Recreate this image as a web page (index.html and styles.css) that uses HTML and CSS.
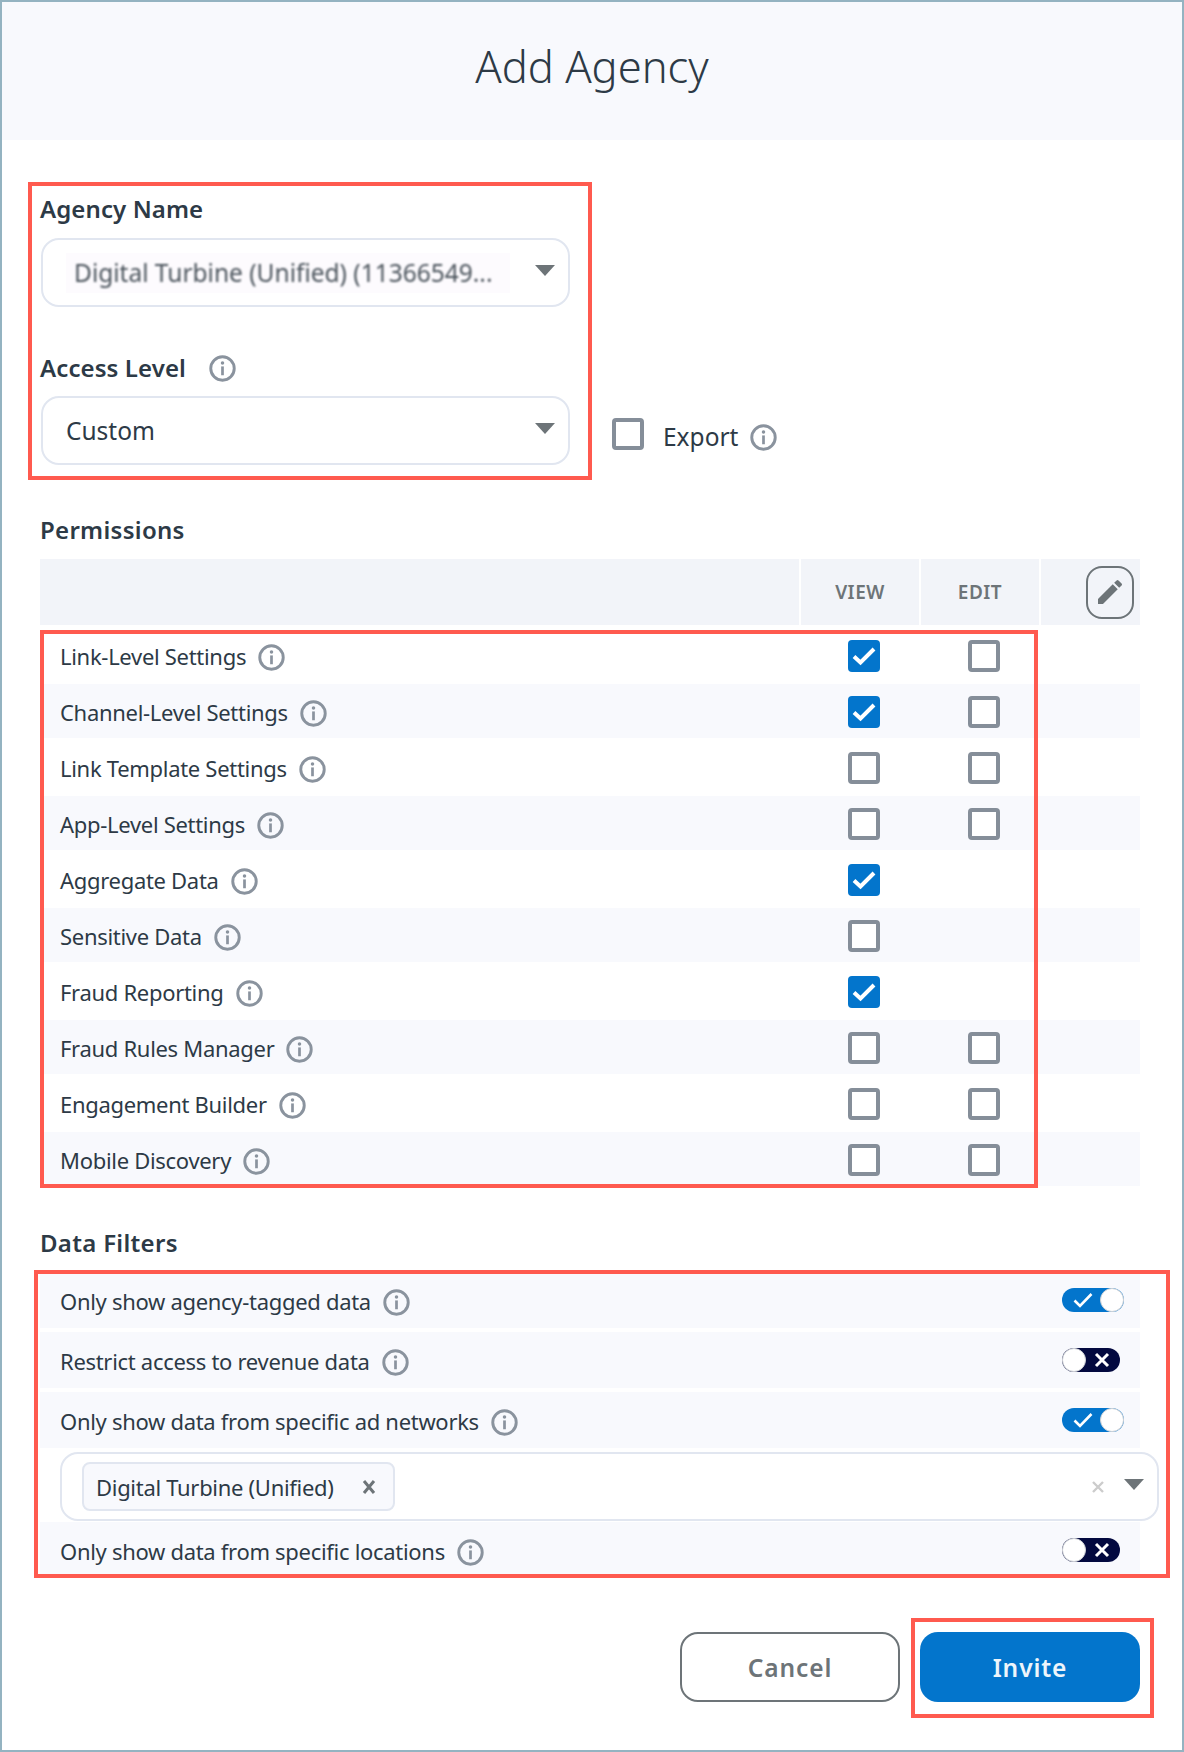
FILE: index.html
```html
<!DOCTYPE html>
<html>
<head>
<meta charset="utf-8">
<title>Add Agency</title>
<link rel="stylesheet" href="styles.css">
</head>
<body>
<svg class="defs" width="0" height="0">
    <symbol id="info" viewBox="0 0 26 26">
        <circle cx="13" cy="13" r="11.3" fill="none" stroke="#8a939e" stroke-width="2.8"/>
        <circle cx="13" cy="7.8" r="1.7" fill="#8a939e"/>
        <rect x="11.7" y="11" width="2.6" height="8.5" fill="#8a939e"/>
    </symbol>
    <symbol id="tick" viewBox="0 0 32 32">
        <polyline points="6,16.5 12.5,22.5 26,9" fill="none" stroke="#fff" stroke-width="4"/>
    </symbol>
</svg>

<div class="dialog">
    <div class="dialog-header">Add Agency</div>

    <div class="dialog-body">
        <div class="access-row">
            <div class="access-fields">
                <div class="field-label">Agency Name</div>
                <div class="select select-first">
                    <span class="blurred-value"><span>Digital Turbine (Unified) (11366549...</span></span>
                    <span class="arrow"></span>
                </div>
                <div class="field-label field-label-second">Access Level <svg class="info info-wide"><use href="#info"/></svg></div>
                <div class="select select-second">
                    <span class="select-value">Custom</span>
                    <span class="arrow"></span>
                </div>
                <div class="annotation annotation-access"></div>
            </div>
            <div class="export">
                <span class="check"></span>
                <span class="export-text">Export</span>
                <svg class="info"><use href="#info"/></svg>
            </div>
        </div>

        <div class="section-title section-permissions">Permissions</div>
        <div class="perm-head">
            <div class="head-cell"></div>
            <div class="head-cell">VIEW</div>
            <div class="head-cell">EDIT</div>
            <div class="head-cell head-edit">
                <button class="pencil-btn">
                    <svg width="32" height="32" viewBox="0 0 24 24"><path fill="#6d7478" d="M3 17.25V21h3.75L17.81 9.94l-3.75-3.75L3 17.25zM20.71 7.04a1 1 0 0 0 0-1.41l-2.34-2.34a1 1 0 0 0-1.41 0l-1.83 1.83 3.75 3.75 1.83-1.83z"/></svg>
                </button>
            </div>
        </div>

        <div class="perm-rows">
            <div class="perm-row">
                <div class="perm-name">Link-Level Settings <svg class="info"><use href="#info"/></svg></div>
                <div class="perm-cell"><span class="check checked"><svg><use href="#tick"/></svg></span></div>
                <div class="perm-cell"><span class="check"></span></div>
            </div>
            <div class="perm-row">
                <div class="perm-name">Channel-Level Settings <svg class="info"><use href="#info"/></svg></div>
                <div class="perm-cell"><span class="check checked"><svg><use href="#tick"/></svg></span></div>
                <div class="perm-cell"><span class="check"></span></div>
            </div>
            <div class="perm-row">
                <div class="perm-name">Link Template Settings <svg class="info"><use href="#info"/></svg></div>
                <div class="perm-cell"><span class="check"></span></div>
                <div class="perm-cell"><span class="check"></span></div>
            </div>
            <div class="perm-row">
                <div class="perm-name">App-Level Settings <svg class="info"><use href="#info"/></svg></div>
                <div class="perm-cell"><span class="check"></span></div>
                <div class="perm-cell"><span class="check"></span></div>
            </div>
            <div class="perm-row">
                <div class="perm-name">Aggregate Data <svg class="info"><use href="#info"/></svg></div>
                <div class="perm-cell"><span class="check checked"><svg><use href="#tick"/></svg></span></div>
                <div class="perm-cell"></div>
            </div>
            <div class="perm-row">
                <div class="perm-name">Sensitive Data <svg class="info"><use href="#info"/></svg></div>
                <div class="perm-cell"><span class="check"></span></div>
                <div class="perm-cell"></div>
            </div>
            <div class="perm-row">
                <div class="perm-name">Fraud Reporting <svg class="info"><use href="#info"/></svg></div>
                <div class="perm-cell"><span class="check checked"><svg><use href="#tick"/></svg></span></div>
                <div class="perm-cell"></div>
            </div>
            <div class="perm-row">
                <div class="perm-name">Fraud Rules Manager <svg class="info"><use href="#info"/></svg></div>
                <div class="perm-cell"><span class="check"></span></div>
                <div class="perm-cell"><span class="check"></span></div>
            </div>
            <div class="perm-row">
                <div class="perm-name">Engagement Builder <svg class="info"><use href="#info"/></svg></div>
                <div class="perm-cell"><span class="check"></span></div>
                <div class="perm-cell"><span class="check"></span></div>
            </div>
            <div class="perm-row">
                <div class="perm-name">Mobile Discovery <svg class="info"><use href="#info"/></svg></div>
                <div class="perm-cell"><span class="check"></span></div>
                <div class="perm-cell"><span class="check"></span></div>
            </div>
            <div class="annotation annotation-perms"></div>
        </div>

        <div class="section-title section-filters">Data Filters</div>
        <div class="filters">
            <div class="filter-row">
                <div class="perm-name">Only show agency-tagged data <svg class="info"><use href="#info"/></svg></div>
                <div class="toggle toggle-on">
                    <svg width="20" height="16" viewBox="0 0 20 16"><polyline points="1.5,8.5 7,14 18.5,2" fill="none" stroke="#fff" stroke-width="2.6"/></svg>
                    <span class="knob"></span>
                </div>
            </div>
            <div class="filter-row">
                <div class="perm-name">Restrict access to revenue data <svg class="info"><use href="#info"/></svg></div>
                <div class="toggle toggle-off">
                    <span class="knob"></span>
                    <svg width="16" height="16" viewBox="0 0 16 16"><path d="M2 2l12 12M14 2L2 14" stroke="#fff" stroke-width="3"/></svg>
                </div>
            </div>
            <div class="filter-row">
                <div class="perm-name">Only show data from specific ad networks <svg class="info"><use href="#info"/></svg></div>
                <div class="toggle toggle-on">
                    <svg width="20" height="16" viewBox="0 0 20 16"><polyline points="1.5,8.5 7,14 18.5,2" fill="none" stroke="#fff" stroke-width="2.6"/></svg>
                    <span class="knob"></span>
                </div>
            </div>
            <div class="select select-networks">
                <div class="chip">
                    <span>Digital Turbine (Unified)</span>
                    <svg width="14" height="16" viewBox="0 0 14 16"><path d="M2 2l10 12M12 2L2 14" stroke="#6d7478" stroke-width="3"/></svg>
                </div>
                <svg class="clear-x" width="12" height="12" viewBox="0 0 12 12"><path d="M1 1l10 10M11 1L1 11" stroke="#ccc" stroke-width="2.4"/></svg>
                <span class="arrow"></span>
            </div>
            <div class="filter-row">
                <div class="perm-name">Only show data from specific locations <svg class="info"><use href="#info"/></svg></div>
                <div class="toggle toggle-off">
                    <span class="knob"></span>
                    <svg width="16" height="16" viewBox="0 0 16 16"><path d="M2 2l12 12M14 2L2 14" stroke="#fff" stroke-width="3"/></svg>
                </div>
            </div>
            <div class="annotation annotation-filters"></div>
        </div>

        <div class="actions">
            <button class="btn btn-cancel">Cancel</button>
            <button class="btn btn-invite">Invite<span class="annotation annotation-invite"></span></button>
        </div>
    </div>
</div>
</body>
</html>
```

FILE: styles.css
```css
* {
    margin: 0;
    padding: 0;
    box-sizing: border-box;
}

body {
    background: white;
    font-family: "Noto Sans", "Open Sans", Arial, sans-serif;
    font-stretch: 87.5%;
    color: #2d3a46;
}

.defs {
    position: absolute;
}

.dialog {
    width: 1184px;
    height: 1752px;
    border: 2px solid #94b3c1;
    background: white;
}

.dialog-header {
    height: 138px;
    background: #f8f9fd;
    display: flex;
    align-items: center;
    justify-content: center;
    font-size: 43.5px;
    font-weight: 350;
    padding-bottom: 10px;
}

.dialog-body {
    padding: 0 42px 0 38px;
}

.info {
    width: 27px;
    height: 27px;
    flex: none;
    margin-left: 4px;
}

/* Red outlines drawn over the screenshot */
.annotation {
    position: absolute;
    border: 4px solid #ff5a4f;
    pointer-events: none;
}

.annotation-access {
    left: -12px;
    top: -11px;
    width: 564px;
    height: 298px;
}

.annotation-perms {
    left: 0;
    top: 2px;
    width: 998px;
    height: 558px;
}

.annotation-filters {
    left: -6px;
    top: -2px;
    width: 1136px;
    height: 308px;
}

.annotation-invite {
    left: -9px;
    top: -14px;
    width: 243px;
    height: 100px;
}

/* Top fields */
.access-row {
    display: flex;
    align-items: flex-end;
    padding-top: 53px;
}

.access-fields {
    position: relative;
    width: 530px;
}

.field-label {
    display: flex;
    align-items: center;
    height: 32px;
    padding-bottom: 2px;
    font-size: 24px;
    font-weight: 600;
    letter-spacing: 0.1px;
}

.field-label-second {
    margin-top: 45px;
}

.info-wide {
    margin-left: 23px;
    margin-top: 3px;
}

.select {
    display: flex;
    align-items: center;
    height: 69px;
    margin-left: 1px;
    background: white;
    border: 2px solid #e1e6f0;
    border-radius: 18px;
    font-size: 24.5px;
}

.select-first {
    width: 529px;
    margin-top: 13px;
    padding-left: 23px;
}

.select-second {
    width: 529px;
    margin-top: 12px;
    padding-left: 23px;
}

.blurred-value {
    width: 444px;
    height: 40px;
    display: flex;
    align-items: center;
    padding-left: 8px;
    background: #fdfbfe;
    color: #4a535b;
    white-space: nowrap;
}

.blurred-value span {
    display: block;
    filter: blur(0.9px);
}

.arrow {
    width: 0;
    height: 0;
    margin-left: auto;
    margin-right: 13px;
    margin-bottom: 5px;
    border-left: 10px solid transparent;
    border-right: 10px solid transparent;
    border-top: 11px solid #6d7478;
}

.export {
    display: flex;
    align-items: center;
    height: 32px;
    margin: 0 0 15px 42px;
    font-size: 24.5px;
}

.export-text {
    margin: 0 8px 0 19px;
    padding-top: 4px;
}

.export .info {
    margin-top: 6px;
}

/* Checkboxes */
.check {
    display: block;
    width: 32px;
    height: 32px;
    border: 4px solid #858e99;
    border-radius: 4px;
    background: white;
}

.check.checked {
    border: none;
    background: #0375cc;
}

.check svg {
    display: block;
    width: 32px;
    height: 32px;
}

/* Permissions */
.section-title {
    display: flex;
    align-items: center;
    height: 32px;
    padding-bottom: 2px;
    font-size: 24px;
    font-weight: 600;
    letter-spacing: 0.3px;
}

.section-permissions {
    margin-top: 49px;
}

.perm-head {
    display: grid;
    grid-template-columns: 759px 118px 118px 99px;
    gap: 2px;
    height: 66px;
    margin-top: 13px;
    margin-bottom: 3px;
}

.head-cell {
    display: flex;
    align-items: center;
    justify-content: center;
    background: #f2f4f9;
    font-size: 19px;
    font-weight: 600;
    color: #6d7478;
    letter-spacing: 0.5px;
}

.head-edit {
    justify-content: flex-end;
    padding-right: 6px;
}

.pencil-btn {
    display: flex;
    align-items: center;
    justify-content: center;
    width: 48px;
    height: 53px;
    background: transparent;
    border: 2px solid #6d7478;
    border-radius: 16px;
}

.perm-rows {
    position: relative;
}

.perm-row {
    display: grid;
    grid-template-columns: 759px 118px 118px;
    column-gap: 2px;
    align-items: center;
    height: 54px;
    margin-bottom: 2px;
    padding-top: 2px;
}

.perm-row:nth-child(even) {
    background: #f8f9fd;
}

.perm-name {
    display: flex;
    align-items: center;
    gap: 8px;
    padding-left: 20px;
    font-size: 22px;
    letter-spacing: -0.3px;
}

.perm-name .info {
    margin-top: 3px;
}

.perm-cell {
    padding-left: 47px;
}

/* Data filters */
.section-filters {
    margin-top: 41px;
}

.filters {
    position: relative;
    margin-top: 13px;
}

.filter-row {
    display: flex;
    align-items: center;
    justify-content: space-between;
    height: 56px;
    padding-right: 16px;
    background: #f8f9fd;
    margin-bottom: 4px;
}

.filter-row .perm-name {
    padding-top: 2px;
}

.filter-row:last-of-type {
    margin-bottom: 0;
}

.toggle {
    display: flex;
    align-items: center;
    height: 24px;
    border-radius: 12px;
}

.toggle-on {
    width: 62px;
    padding-left: 11px;
    background: #0375cc;
    justify-content: space-between;
}

.toggle-off {
    width: 58px;
    margin-right: 4px;
    padding-right: 10px;
    background: #03093f;
    justify-content: space-between;
}

.knob {
    width: 24px;
    height: 24px;
    border-radius: 50%;
    background: white;
    border: 1px solid #cfd2d6;
}

.select-networks {
    width: 1099px;
    margin: 0 0 1px 20px;
    padding-left: 20px;
    font-size: 22px;
    letter-spacing: -0.3px;
}

.chip {
    display: flex;
    align-items: center;
    justify-content: space-between;
    width: 313px;
    height: 49px;
    padding: 0 17px 0 12px;
    background: #f8f9fd;
    border: 2px solid #e1e6f0;
    border-radius: 8px;
}

.clear-x {
    margin-left: auto;
}

.select-networks .arrow {
    margin-left: 20px;
}

/* Footer */
.actions {
    display: flex;
    justify-content: flex-end;
    gap: 20px;
    margin-top: 54px;
}

.btn {
    position: relative;
    width: 220px;
    height: 70px;
    border-radius: 18px;
    font-family: inherit;
    font-stretch: inherit;
    font-size: 24.5px;
    font-weight: 600;
    letter-spacing: 0.9px;
}

.btn-cancel {
    background: white;
    border: 2px solid #6d7478;
    color: #6d7478;
}

.btn-invite {
    background: #0375cc;
    border: none;
    color: #eef5fb;
}
```
